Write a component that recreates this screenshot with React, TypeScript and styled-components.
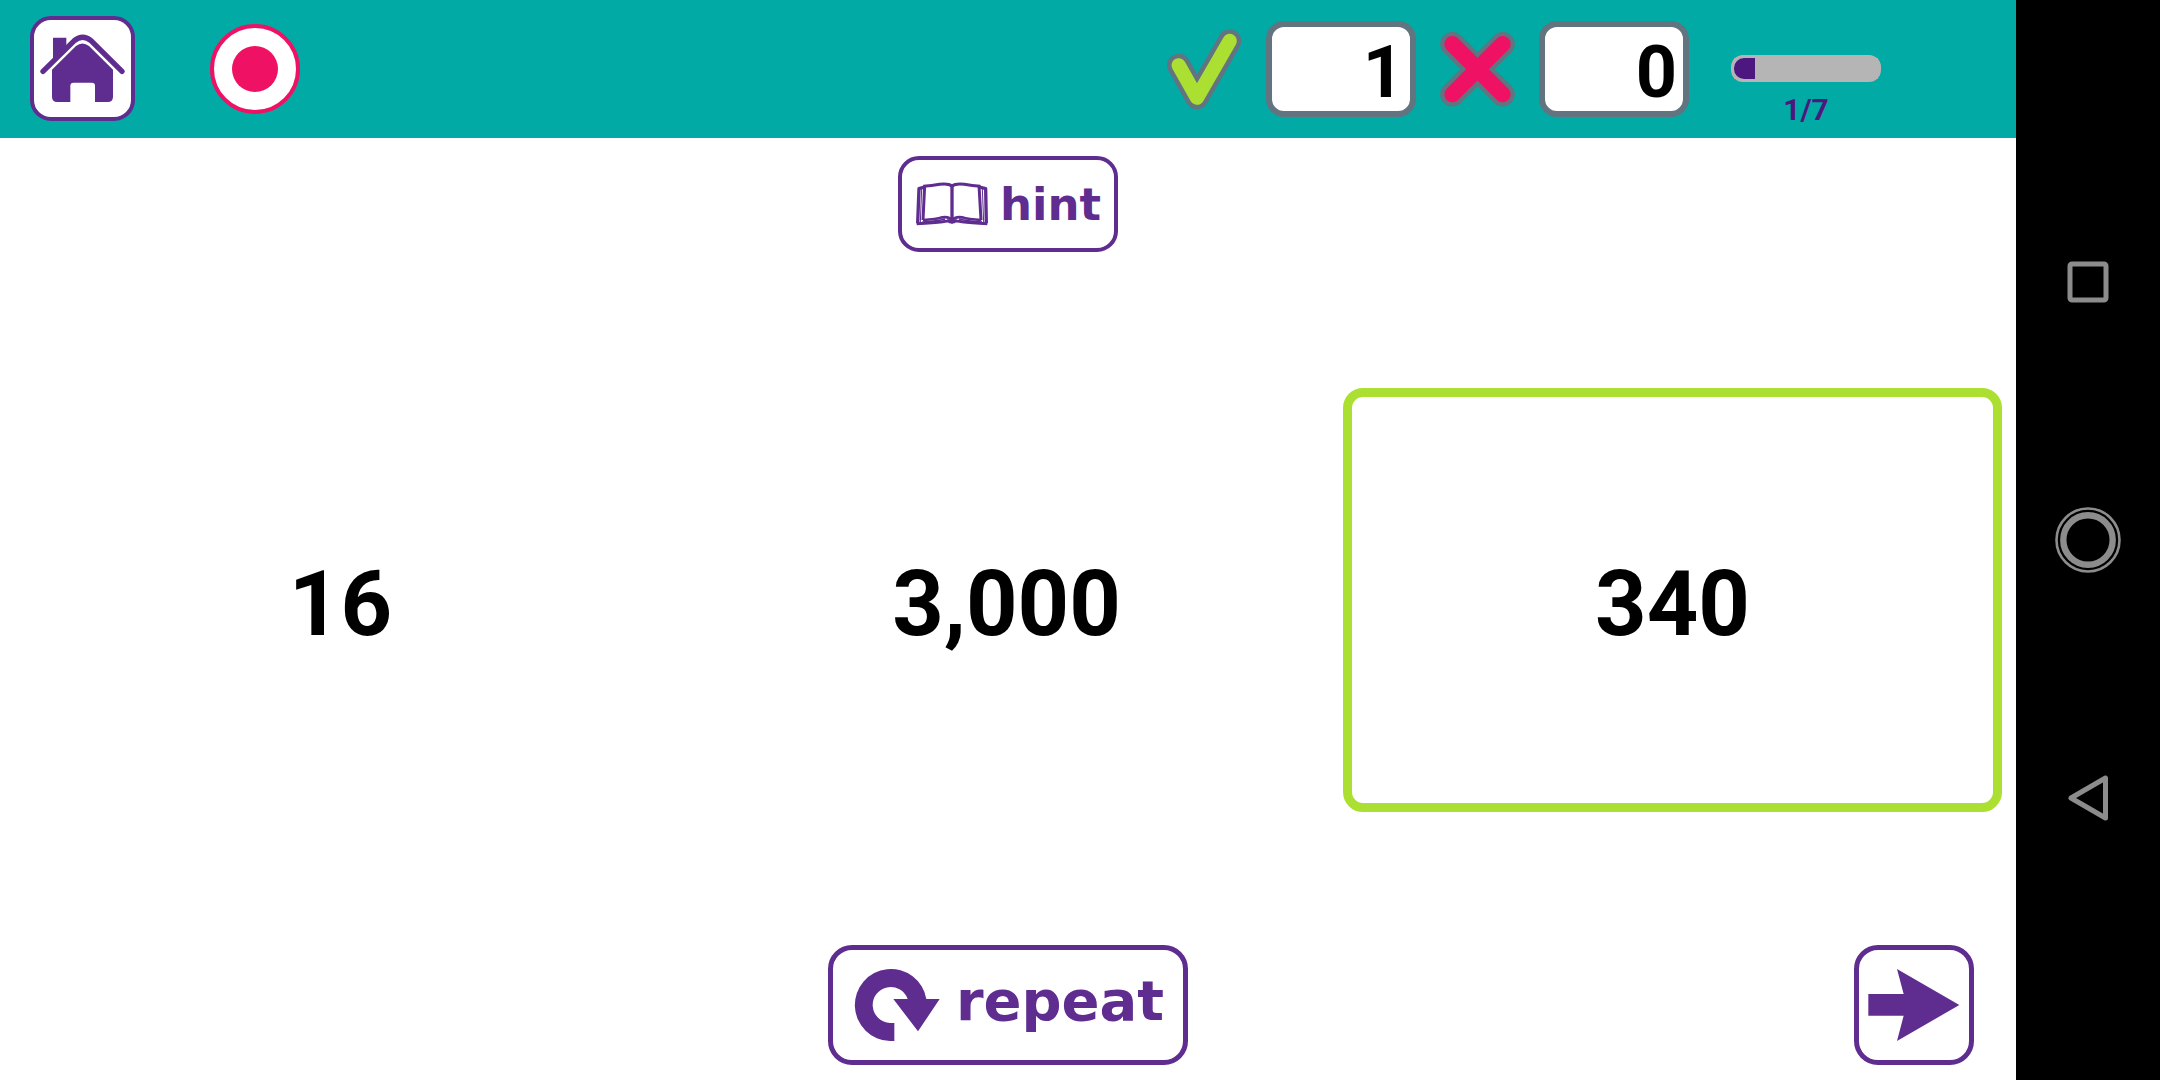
import React, { useState } from "react";
import styled, { createGlobalStyle } from "styled-components";

const color = {
  teal: "#02aaa6",
  purple: "#5f2c8f",
  deepPurple: "#4c177e",
  pink: "#ef1164",
  green: "#abe033",
  slate: "#62747f",
  track: "#b5b5b5",
  navIcon: "#8c8c8c",
};

const GlobalStyle = createGlobalStyle`
  *, *::before, *::after {
    box-sizing: border-box;
  }
  body {
    margin: 0;
    background: #fff;
    font-family: Roboto, "Noto Sans", sans-serif;
  }
  button {
    margin: 0;
    padding: 0;
    font: inherit;
    color: inherit;
    background: none;
    border: 0;
    cursor: pointer;
  }
  svg {
    display: block;
  }
`;

const Screen = styled.div`
  display: flex;
  min-height: 100vh;
`;

const Game = styled.div`
  flex: 1;
  min-width: 0;
  display: flex;
  flex-direction: column;
`;

const Header = styled.header`
  display: flex;
  align-items: center;
  justify-content: space-between;
  height: 138px;
  padding: 0 135px 0 30px;
  background: ${color.teal};
`;

const Tools = styled.div`
  display: flex;
  align-items: center;
  gap: 75px;
  padding-bottom: 1px;
`;

const HomeButton = styled.button`
  width: 105px;
  height: 105px;
  border: 4px solid ${color.purple};
  border-radius: 21px;
  background: #fff;
`;

const RecordButton = styled.button`
  display: grid;
  place-items: center;
  width: 90px;
  height: 90px;
  border: 4px solid ${color.pink};
  border-radius: 50%;
  background: #fff;
`;

const RecordDot = styled.span`
  width: 46px;
  height: 46px;
  border-radius: 50%;
  background: ${color.pink};
`;

const Status = styled.div`
  display: flex;
  align-items: center;
  gap: 24px;
  height: 100%;
`;

const Score = styled.output`
  width: 150px;
  height: 96px;
  padding: 4px 6px 0 0;
  border: 6px solid ${color.slate};
  border-radius: 18px;
  background: #fff;
  color: #000;
  font-size: 72px;
  font-weight: 700;
  line-height: 84px;
  text-align: right;
`;

const ProgressGroup = styled.div`
  align-self: flex-start;
  display: flex;
  flex-direction: column;
  align-items: center;
  gap: 10px;
  margin-left: 18px;
  padding-top: 55px;
`;

const ProgressBar = styled.progress`
  display: block;
  appearance: none;
  width: 150px;
  height: 27px;
  border: 3px solid ${color.track};
  border-radius: 12px;
  background: ${color.track};

  &::-webkit-progress-bar {
    background: ${color.track};
  }
  &::-webkit-progress-value {
    border-radius: 10px 0 0 10px;
    background: ${color.deepPurple};
  }
`;

const ProgressLabel = styled.label`
  color: ${color.deepPurple};
  font-size: 30px;
  font-weight: 700;
  line-height: 36px;
`;

const Board = styled.main`
  flex: 1;
  display: flex;
  flex-direction: column;
  padding: 18px 0 15px;
`;

const OutlineButton = styled.button<{ $size: "small" | "large" }>`
  display: flex;
  align-items: center;
  justify-content: center;
  height: ${(p) => (p.$size === "small" ? 96 : 120)}px;
  border: ${(p) => (p.$size === "small" ? 4 : 5)}px solid ${color.purple};
  border-radius: ${(p) => (p.$size === "small" ? 21 : 24)}px;
  background: #fff;
  color: ${color.purple};
  font-family: "DejaVu Sans", Verdana, sans-serif;
  font-size: ${(p) => (p.$size === "small" ? 45 : 56)}px;
  font-weight: 700;
  line-height: 1;
`;

const HintButton = styled(OutlineButton)`
  align-self: center;
  width: 220px;
  gap: 11px;
`;

const RepeatButton = styled(OutlineButton)`
  grid-column: 2;
  width: 360px;
  gap: 16px;
  padding: 0 0 8px 2px;

  svg {
    margin-top: 8px;
  }
`;

const NextButton = styled(OutlineButton)`
  justify-self: end;
  width: 120px;
`;

const Answers = styled.div`
  flex: 1;
  display: grid;
  grid-template-columns: repeat(3, 1fr);
  gap: 7px;
  padding: 136px 14px 133px 11px;
`;

const Answer = styled.button<{ $selected: boolean }>`
  padding-top: 10px;
  border: 9px solid ${(p) => (p.$selected ? color.green : "transparent")};
  border-radius: 20px;
  color: #000;
  font-size: 90px;
  font-weight: 700;
  line-height: 106px;
`;

const Footer = styled.footer`
  display: grid;
  grid-template-columns: 1fr auto 1fr;
  padding: 0 42px;
`;

const SystemNav = styled.nav`
  flex: none;
  display: flex;
  flex-direction: column;
  align-items: center;
  justify-content: center;
  gap: 192px;
  width: 144px;
  background: #000;
`;

const NavButton = styled.button`
  width: 66px;
  height: 66px;
`;

const HomeIcon = () => (
  <svg width="97" height="97" viewBox="102 60 291 291" aria-hidden="true">
    <path
      fill={color.purple}
      d="M156 209 L228 138 Q247 123 267 138 L339 209 V290 Q339 306 323 306 H285 V257 Q285 248 276 248 H220 Q211 248 211 257 V306 H172 Q156 306 156 290 Z"
    />
    <path fill={color.purple} d="M159 113 H199 V140 L159 178 Z" />
    <path
      fill="none"
      stroke={color.purple}
      strokeWidth="16"
      strokeLinecap="round"
      strokeLinejoin="round"
      d="M129 214 L223 122 Q248 102 273 122 L366 214"
    />
  </svg>
);

const CheckIcon = () => (
  <svg width="75" height="81" viewBox="51 86 225 243" role="img" aria-label="Correct">
    <g fill="none" strokeLinecap="round" strokeLinejoin="round">
      <path stroke={color.slate} strokeWidth="70" d="M86 195 L141 292 L239 122" />
      <path stroke={color.green} strokeWidth="43" d="M86 195 L141 292 L239 122" />
    </g>
  </svg>
);

const CrossIcon = () => (
  <svg width="75" height="75" viewBox="60 96 225 225" role="img" aria-label="Wrong">
    <g fill="none" strokeLinecap="round">
      <path stroke={color.slate} strokeWidth="73" d="M97 132 L248 283 M248 132 L97 283" />
      <path stroke={color.pink} strokeWidth="48" d="M97 132 L248 283 M248 132 L97 283" />
    </g>
  </svg>
);

const BookIcon = () => (
  <svg width="74" height="46" viewBox="102 123 222 138" aria-hidden="true">
    <g fill="none" stroke={color.purple} strokeLinejoin="round">
      <path strokeWidth="9" d="M127 139 Q152 138 176 133 Q202 130 213 138 Q224 130 250 133 Q274 138 298 139" />
      <path strokeWidth="10" d="M213 137 V240" />
      <path strokeWidth="9" d="M131 136 L126 240 M294 136 L300 240" />
      <path strokeWidth="10" d="M130 141 L114 146 L110 250 M295 141 L314 146 L316 250" />
      <path strokeWidth="3" d="M122 146 L118 246 M304 146 L308 246" />
      <path strokeWidth="8" d="M126 240 Q165 238 184 232 Q205 229 213 241 Q222 229 243 232 Q262 238 301 240" />
      <path strokeWidth="9" d="M107 251 Q160 248 185 245 Q205 241 213 247 Q222 241 243 245 Q268 248 319 251" />
      <path strokeWidth="5" d="M124 246 Q170 243 192 237 M303 246 Q258 243 234 237" />
    </g>
    <path fill={color.purple} d="M198 238 H228 L221 250 H204 Z" />
  </svg>
);

const RepeatIcon = () => (
  <svg width="86" height="72" viewBox="104 117 258 216" aria-hidden="true">
    <path
      fill={color.purple}
      d="M225 333 H212 A108 108 0 1 1 321 207 H361 L296 304 L222 207 H265 A54 54 0 1 0 212 279 H225 Z"
    />
  </svg>
);

const NextIcon = () => (
  <svg width="110" height="110" viewBox="57 60 330 330" aria-hidden="true">
    <path fill={color.purple} d="M85 192 H191 L171 117 L358 225 L171 333 L191 257 H85 Z" />
  </svg>
);

const RecentsIcon = () => (
  <svg width="66" height="66" viewBox="0 0 66 66" fill="none" stroke={color.navIcon} aria-hidden="true">
    <rect x="15" y="15" width="36" height="36" rx="2" strokeWidth="5" />
  </svg>
);

const CircleIcon = () => (
  <svg width="66" height="66" viewBox="0 0 66 66" fill="none" stroke={color.navIcon} aria-hidden="true">
    <circle cx="33" cy="33" r="31.5" strokeWidth="2.6" />
    <circle cx="33" cy="33" r="24.7" strokeWidth="6.4" />
  </svg>
);

const BackIcon = () => (
  <svg width="66" height="66" viewBox="0 0 66 66" fill="none" stroke={color.navIcon} aria-hidden="true">
    <path d="M16 33 L50.500 13 V53 Z" strokeWidth="5" strokeLinejoin="round" />
  </svg>
);

const answers = ["16", "3,000", "340"];

export default function App() {
  const [selected, setSelected] = useState("340");

  return (
    <>
      <GlobalStyle />
      <Screen>
        <Game>
          <Header>
            <Tools>
              <HomeButton type="button" aria-label="Home">
                <HomeIcon />
              </HomeButton>
              <RecordButton type="button" aria-label="Record">
                <RecordDot />
              </RecordButton>
            </Tools>
            <Status>
              <CheckIcon />
              <Score aria-label="Correct answers">1</Score>
              <CrossIcon />
              <Score aria-label="Wrong answers">0</Score>
              <ProgressGroup>
                <ProgressBar id="progress" value={1} max={7} />
                <ProgressLabel htmlFor="progress">1/7</ProgressLabel>
              </ProgressGroup>
            </Status>
          </Header>
          <Board>
            <HintButton type="button" $size="small">
              <BookIcon />
              hint
            </HintButton>
            <Answers>
              {answers.map((answer) => (
                <Answer
                  key={answer}
                  type="button"
                  $selected={answer === selected}
                  aria-pressed={answer === selected}
                  onClick={() => setSelected(answer)}
                >
                  {answer}
                </Answer>
              ))}
            </Answers>
            <Footer>
              <RepeatButton type="button" $size="large">
                <RepeatIcon />
                repeat
              </RepeatButton>
              <NextButton type="button" $size="large" aria-label="Next">
                <NextIcon />
              </NextButton>
            </Footer>
          </Board>
        </Game>
        <SystemNav aria-label="System">
          <NavButton type="button" aria-label="Recent apps">
            <RecentsIcon />
          </NavButton>
          <NavButton type="button" aria-label="Home screen">
            <CircleIcon />
          </NavButton>
          <NavButton type="button" aria-label="Back">
            <BackIcon />
          </NavButton>
        </SystemNav>
      </Screen>
    </>
  );
}
